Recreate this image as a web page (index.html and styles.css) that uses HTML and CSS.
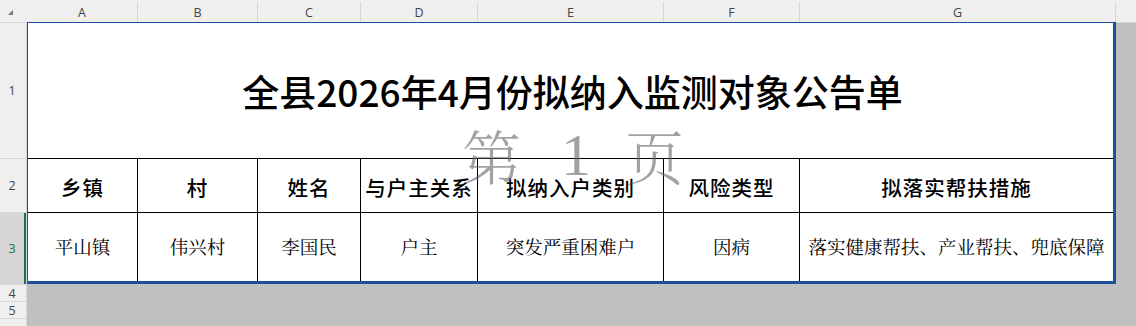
FILE: index.html
```html
<!DOCTYPE html>
<html lang="zh-CN">
<head>
<meta charset="utf-8">
<title>公告单</title>
<link rel="stylesheet" href="styles.css">
</head>
<body>
<div class="app">
  <div class="colbar">
    <div class="corner"><span class="tri"></span></div>
    <div class="colhead w-a">A</div>
    <div class="colhead w-b">B</div>
    <div class="colhead w-c">C</div>
    <div class="colhead w-d">D</div>
    <div class="colhead w-e">E</div>
    <div class="colhead w-f">F</div>
    <div class="colhead w-g">G</div>
    <div class="colhead fill"></div>
  </div>
  <div class="body">
    <div class="rowheads">
      <div class="rowhead r1">1</div>
      <div class="rowhead r2">2</div>
      <div class="rowhead r3 sel">3</div>
      <div class="rowhead r4">4</div>
      <div class="rowhead r5">5</div>
      <div class="rowhead r6">6</div>
    </div>
    <div class="sheet">
      <div class="grid">
        <div class="title">全县2026年4月份拟纳入监测对象公告单</div>
        <div class="cell hd">乡镇</div>
        <div class="cell hd">村</div>
        <div class="cell hd">姓名</div>
        <div class="cell hd">与户主关系</div>
        <div class="cell hd">拟纳入户类别</div>
        <div class="cell hd">风险类型</div>
        <div class="cell hd last">拟落实帮扶措施</div>
        <div class="cell dt">平山镇</div>
        <div class="cell dt">伟兴村</div>
        <div class="cell dt">李国民</div>
        <div class="cell dt">户主</div>
        <div class="cell dt">突发严重困难户</div>
        <div class="cell dt">因病</div>
        <div class="cell dt last">落实健康帮扶、产业帮扶、兜底保障</div>
      </div>
      <div class="watermark"><span class="wm-cjk">第</span><span class="wm-num">1</span><span class="wm-cjk">页</span></div>
    </div>
  </div>
</div>
</body>
</html>
```

FILE: styles.css
```css
* { box-sizing: border-box; }
html, body { margin: 0; padding: 0; }
body {
  width: 1136px;
  height: 326px;
  overflow: hidden;
  background: #c0c0c0;
  font-family: "Liberation Sans", "Noto Sans CJK SC", sans-serif;
}
.app { width: 1136px; height: 326px; overflow: hidden; }

.colbar {
  display: flex;
  height: 23px;
  background: #efefef;
  border-bottom: 1px solid #d9d9d9;
}
.corner {
  width: 27px;
  position: relative;
  flex: none;
}
.tri {
  position: absolute;
  left: 8px;
  top: 10px;
  width: 0;
  height: 0;
  border-left: 5px solid transparent;
  border-bottom: 5px solid #7a7a7a;
}
.colhead {
  flex: none;
  display: flex;
  align-items: center;
  justify-content: center;
  font-family: "Open Sans", "Liberation Sans", sans-serif;
  font-size: 12.5px;
  color: #444;
  padding-top: 3px;
  border-right: 1px solid #d6d6d6;
}
.colhead:not(.fill) {
  border-image: linear-gradient(to bottom, transparent 2px, #d6d6d6 2px) 0 1 0 0;
}
.w-a { width: 111px; }
.w-b { width: 120px; }
.w-c { width: 103px; }
.w-d { width: 117px; }
.w-e { width: 186px; }
.w-f { width: 136px; }
.w-g { width: 316px; }
.fill { flex: 1; border-right: none; }

.body { display: flex; }
.rowheads {
  width: 27px;
  flex: none;
  background: #efefef;
  border-right: 1px solid #d6d6d6;
}
.rowhead {
  display: flex;
  align-items: center;
  justify-content: center;
  font-family: "Open Sans", "Liberation Sans", sans-serif;
  font-size: 12.5px;
  color: #444;
  border-bottom: 1px solid #d6d6d6;
  padding-right: 2px;
}
.r1 { height: 136px; }
.r2 { height: 54px; }
.r3 { height: 72px; }
.r4 { height: 17px; }
.r5 { height: 17px; }
.r6 { height: 17px; padding-top: 6px; }
.rowhead.sel {
  background: #d6d6d6;
  color: #217346;
  box-shadow: inset -2px 0 0 #1e7145;
}

.sheet {
  position: relative;
  width: 1089px;
  flex: none;
}
.grid {
  display: grid;
  grid-template-columns: 110px 120px 103px 117px 186px 136px 313px;
  grid-template-rows: 136px 54px 68px;
  background: #fff;
  border-left: 1px solid #1f4e9f;
  border-top: 1px solid #1f4e9f;
  border-right: 3px solid #1f4e9f;
  border-bottom: 3px solid #1f4e9f;
  margin-top: -1px;
}
.title {
  grid-column: 1 / -1;
  display: flex;
  align-items: center;
  justify-content: center;
  border-bottom: 1px solid #000;
  font-family: "Noto Sans CJK SC", sans-serif;
  font-weight: 500;
  font-size: 37px;
  color: #000;
  padding-top: 1px;
  padding-left: 4px;
}
.cell {
  display: flex;
  align-items: center;
  justify-content: center;
  border-right: 1px solid #000;
  border-bottom: 1px solid #000;
  color: #000;
  white-space: nowrap;
  overflow: hidden;
}
.cell.last { border-right: none; }
.dt { border-bottom: none; }
.hd {
  font-family: "Noto Sans CJK SC", sans-serif;
  font-weight: 500;
  font-size: 20.5px;
  letter-spacing: 1px;
  padding-top: 2px;
}
.dt {
  font-family: "Noto Serif CJK SC", "Noto Sans CJK SC", serif;
  font-size: 18.5px;
  padding-bottom: 2px;
}
.watermark {
  position: absolute;
  left: 435px;
  top: 97px;
  display: flex;
  align-items: center;
  height: 70px;
  color: rgba(100, 100, 100, 0.6);
  pointer-events: none;
}
.wm-cjk {
  font-family: "Noto Serif CJK SC", "Noto Sans CJK SC", serif;
  font-size: 59px;
  font-weight: 300;
  line-height: 70px;
}
.wm-num {
  font-family: "Liberation Serif", serif;
  font-size: 60px;
  line-height: 70px;
  margin: 0 34px 0 40px;
}
```
